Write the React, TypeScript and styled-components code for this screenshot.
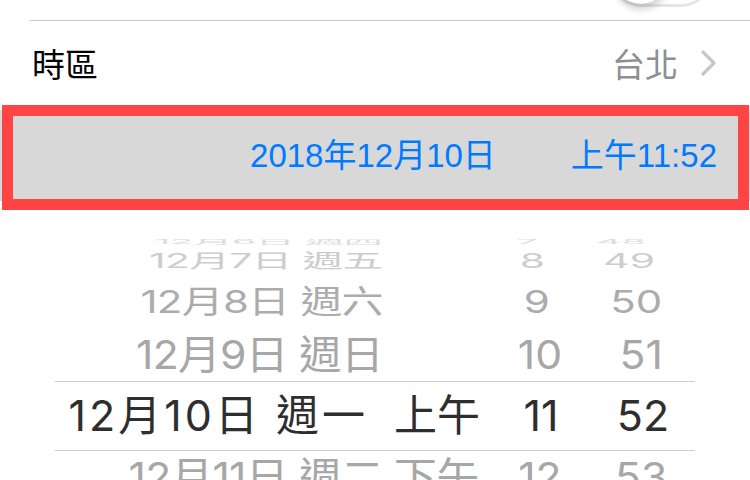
import React from "react";
import styled, { createGlobalStyle } from "styled-components";

const Global = createGlobalStyle`
  html, body { margin: 0; padding: 0; background: #ffffff; }
  body { font-family: "Liberation Sans", "Noto Sans CJK TC", sans-serif; }
`;

const Page = styled.div`
  width: 750px;
  height: 480px;
  overflow: hidden;
  background: #ffffff;
  display: flex;
  flex-direction: column;
`;

const SwitchRow = styled.div`
  height: 20px;
  flex: none;
  overflow: hidden;
  display: flex;
  justify-content: flex-end;
  align-items: flex-end;
  padding-right: 38px;
`;

const Switch = styled.div`
  width: 102px;
  height: 62px;
  flex: none;
  margin-bottom: 13px;
  box-sizing: border-box;
  border-radius: 31px;
  border: 3px solid #e6e6ea;
  background: #ffffff;
  display: flex;
  align-items: center;
`;

const Knob = styled.div`
  width: 56px;
  height: 56px;
  border-radius: 50%;
  background: #ffffff;
  box-shadow: 0 6px 6px rgba(0, 0, 0, 0.16), 0 0 1px rgba(0, 0, 0, 0.2);
`;

const Separator = styled.div`
  height: 1px;
  flex: none;
  margin-left: 30px;
  background: #c8c7cc;
`;

const NavRow = styled.div`
  height: 89px;
  flex: none;
  box-sizing: border-box;
  display: flex;
  align-items: center;
  padding: 0 32px 5px 32px;
  font-size: 33px;
`;

const Label = styled.span`
  color: #000000;
  flex: 1;
`;

const Value = styled.span`
  color: #8e8e93;
  margin-right: 22px;
`;

const HighlightWrap = styled.div`
  position: relative;
  flex: none;
`;

const DateCell = styled.div`
  height: 91px;
  box-sizing: border-box;
  background: #d8d8d8;
  display: flex;
  justify-content: flex-end;
  align-items: center;
  gap: 75px;
  padding: 0 33px 5px 0;
  font-size: 33px;
`;

const BlueText = styled.span`
  color: #007aff;
`;

const Annotation = styled.div`
  position: absolute;
  top: -5px;
  bottom: -9px;
  left: 2px;
  right: 1px;
  border: 11px solid #ff4444;
  pointer-events: none;
`;

const Picker = styled.div`
  position: relative;
  flex: none;
  height: 432px;
  padding-top: 36px;
  box-sizing: border-box;
  overflow: hidden;
  display: flex;
  flex-direction: column;
`;

const WheelRow = styled.div`
  flex: none;
  display: flex;
  align-items: center;
  overflow: visible;
`;

const RowText = styled.div<{ $color: string }>`
  width: 750px;
  display: grid;
  grid-template-columns: 383px 108px 100px 104px 1fr;
  align-items: center;
  font-family: Inter, "Noto Sans CJK TC", sans-serif;
  font-size: 43px;
  line-height: 50px;
  color: ${(p) => p.$color};
  transform-origin: 375px 50%;
  white-space: nowrap;
`;

const DateCol = styled.span<{ $selected: boolean }>`
  text-align: right;
  letter-spacing: ${(p) => (p.$selected ? "3px" : "-0.75px")};
  padding-right: ${(p) => (p.$selected ? "15px" : "0")};
`;

const CenterCol = styled.span`
  text-align: center;
`;

const SelectionBand = styled.div`
  position: absolute;
  top: 180px;
  left: 55px;
  right: 55px;
  height: 68px;
  border-top: 1px solid #cfcfd2;
  border-bottom: 1px solid #cfcfd2;
  pointer-events: none;
`;

const Chevron = () => (
  <svg width="18" height="26" viewBox="0 0 18 26" style={{ display: "block" }}>
    <polyline
      points="3,2 14,13 3,24"
      fill="none"
      stroke="#c7c7cc"
      strokeWidth="3.2"
      strokeLinecap="round"
      strokeLinejoin="round"
    />
  </svg>
);

type Row = { i: number; date: string; ampm: string; hour: string; min: string };

const rows: Row[] = [
  { i: -4, date: "12月6日 週四", ampm: "", hour: "7", min: "48" },
  { i: -3, date: "12月7日 週五", ampm: "", hour: "8", min: "49" },
  { i: -2, date: "12月8日 週六", ampm: "", hour: "9", min: "50" },
  { i: -1, date: "12月9日 週日", ampm: "", hour: "10", min: "51" },
  { i: 0, date: "12月10日 週一", ampm: "上午", hour: "11", min: "52" },
  { i: 1, date: "12月11日 週二", ampm: "下午", hour: "12", min: "53" },
  { i: 2, date: "12月12日 週三", ampm: "", hour: "1", min: "54" },
];

const R = 178;
const A = (20.4 * Math.PI) / 180;
const D = 1700;
const clamp = (v: number) => Math.max(-Math.PI / 2, Math.min(Math.PI / 2, v));
const colors = ["#2e2e2e", "#a7a7a7", "#acacac", "#cdcdcd", "#dddddd"];

export default function App() {
  return (
    <>
      <Global />
      <Page>
        <SwitchRow>
          <Switch>
            <Knob />
          </Switch>
        </SwitchRow>
        <Separator />
        <NavRow>
          <Label>時區</Label>
          <Value>台北</Value>
          <Chevron />
        </NavRow>
        <HighlightWrap>
          <DateCell>
            <BlueText>2018年12月10日</BlueText>
            <BlueText>上午11:52</BlueText>
          </DateCell>
          <Annotation />
        </HighlightWrap>
        <Picker>
          {rows.map((r) => {
            const t = r.i * A;
            const h = R * (Math.sin(clamp(t + A / 2)) - Math.sin(clamp(t - A / 2)));
            const p = D / (D + R * (1 - Math.cos(t)));
            const sy = Math.max(0.02, Math.cos(t)) * p;
            return (
              <WheelRow key={r.i} style={{ height: `${h}px` }}>
                <RowText
                  $color={colors[Math.abs(r.i)]}
                  style={{ transform: `scale(${p}, ${sy})` }}
                >
                  <DateCol $selected={r.i === 0}>{r.date}</DateCol>
                  <CenterCol>{r.ampm}</CenterCol>
                  <CenterCol>{r.hour}</CenterCol>
                  <CenterCol>{r.min}</CenterCol>
                  <span />
                </RowText>
              </WheelRow>
            );
          })}
          <SelectionBand />
        </Picker>
      </Page>
    </>
  );
}
